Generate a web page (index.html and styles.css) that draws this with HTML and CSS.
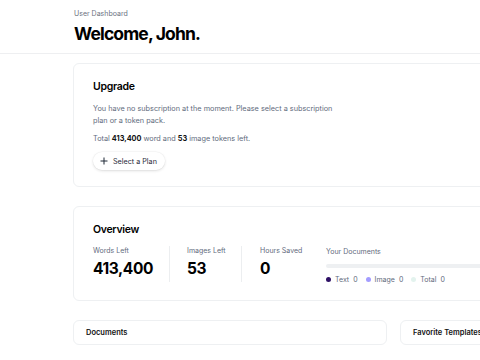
FILE: index.html
```html
<!DOCTYPE html>
<html>
<head>
<meta charset="utf-8">
<link rel="stylesheet" href="styles.css">
</head>
<body>
<header class="page-header">
  <div class="crumb">User Dashboard</div>
  <h1 class="title">Welcome, John.</h1>
</header>
<main class="content">
  <section class="card upgrade">
    <h2 class="card-title">Upgrade</h2>
    <p class="muted desc">You have no subscription at the moment. Please select a subscription plan or a token pack.</p>
    <p class="muted total">Total <b>413,400</b> word and <b>53</b> image tokens left.</p>
    <button class="plan-btn"><svg width="8" height="8" viewBox="0 0 8 8"><path d="M4 0.5V7.5M0.5 4H7.5" stroke="#1f2937" stroke-width="1"/></svg>Select a Plan</button>
  </section>
  <section class="card overview">
    <h2 class="card-title">Overview</h2>
    <div class="stats">
      <div class="stat s1"><div class="label">Words Left</div><div class="value">413,400</div></div>
      <div class="stat s2"><div class="label">Images Left</div><div class="value">53</div></div>
      <div class="stat s3"><div class="label">Hours Saved</div><div class="value">0</div></div>
      <div class="docs">
        <div class="label docs-label">Your Documents</div>
        <div class="bar"></div>
        <div class="legend">
          <span class="item"><i class="dot d-text"></i>Text<span class="n">0</span></span>
          <span class="item"><i class="dot d-image"></i>Image<span class="n">0</span></span>
          <span class="item"><i class="dot d-total"></i>Total<span class="n">0</span></span>
        </div>
      </div>
    </div>
  </section>
  <div class="bottom">
    <section class="card small">Documents</section>
    <section class="card small">Favorite Templates</section>
  </div>
</main>
</body>
</html>
```
FILE: styles.css
```css
html, body { margin: 0; padding: 0; overflow: hidden; background: #fff; }
body { font-family: Inter, "Liberation Sans", sans-serif; color: #111; width: 480px; height: 360px; }
.page-header { padding: 9px 0 0 74px; height: 44px; border-bottom: 1px solid #eeeff1; }
.crumb { font-size: 7px; color: #6b7280; line-height: 9px; }
.title { margin: 4px 0 0; font-size: 17.5px; font-weight: 700; line-height: 24px; letter-spacing: -0.85px; color: #000; }
.content { width: 620px; padding: 9px 0 0 73px; display: flex; flex-direction: column; gap: 19px; }
.card { border: 1px solid #eef0f2; border-radius: 6px; background: #fff; box-sizing: border-box; }
.upgrade { height: 124px; padding: 16px 19px; }
.card-title { margin: 0; font-size: 10.5px; font-weight: 600; line-height: 14px; letter-spacing: -0.3px; color: #000; }
.muted { font-size: 7.3px; color: #5f6b7d; line-height: 12px; margin: 0; }
.desc { margin-top: 9px; width: 252px; }
.total { margin-top: 6px; }
.total b { color: #111; font-weight: 700; }
.plan-btn { margin-top: 7px; height: 18px; padding: 0 8px 0 7px; border: none; border-radius: 9px; background: #fff; box-shadow: 0 1px 3px rgba(0,0,0,0.12), 0 0 0 0.5px rgba(0,0,0,0.04); font-family: inherit; font-size: 7.2px; color: #1f2937; display: flex; align-items: center; gap: 5px; }
.overview { height: 95px; padding: 16px 19px; }
.stats { display: flex; margin-top: 9px; }
.stat { border-right: 1px solid #eceef0; height: 36px; }
.s1 { width: 76px; }
.s2 { width: 54px; padding-left: 17px; }
.s3 { width: 66px; padding-left: 18px; border-right: none; }
.label { font-size: 7px; color: #5f6b7d; line-height: 9px; }
.value { margin-top: 4px; font-size: 15.5px; font-weight: 700; line-height: 20px; letter-spacing: -0.4px; color: #000; }
.docs { flex: 1; }
.docs-label { margin-top: 1px; }
.bar { margin-top: 8px; height: 4px; border-radius: 2px; background: #eef0f2; }
.legend { margin-top: 7px; display: flex; gap: 8px; font-size: 7px; color: #5f6b7d; line-height: 9px; }
.item { display: flex; align-items: center; }
.dot { width: 5px; height: 5px; border-radius: 50%; margin-right: 4px; display: inline-block; }
.d-text { background: #2e1065; }
.d-image { background: #a39cff; }
.d-total { background: #e3f3ee; }
.n { margin-left: 4px; }
.bottom { display: flex; gap: 13px; }
.small { height: 25px; padding: 0 12px; font-size: 7.5px; font-weight: 600; line-height: 23px; color: #111; }
.bottom .small:first-child { width: 314px; }
.bottom .small:last-child { width: 180px; }
```
